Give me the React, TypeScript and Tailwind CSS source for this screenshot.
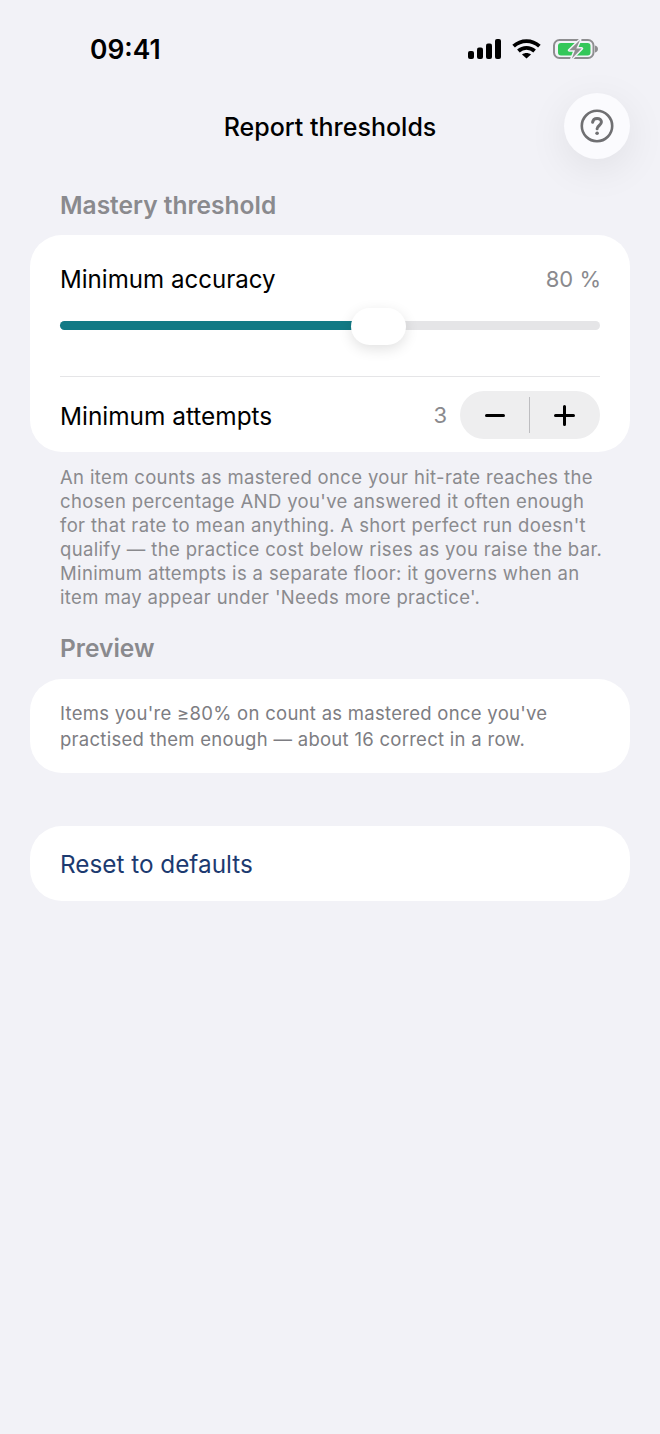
const sans = "font-['Inter','Noto_Sans',sans-serif]"

const StatusIcons = () => (
    <div className="flex items-center">
        <svg width="33" height="20" viewBox="0 0 33 20" fill="#000">
            <rect x="0" y="12" width="6" height="8" rx="2" />
            <rect x="9" y="8.5" width="6" height="11.5" rx="2" />
            <rect x="18" y="4.5" width="6" height="15.5" rx="2" />
            <rect x="27" y="0" width="6" height="20" rx="2" />
        </svg>
        <svg className="ml-[11px]" width="29" height="20" viewBox="0 0 29 20" fill="none" stroke="#000" strokeWidth="3.8">
            <path d="M1.6 7.2C9 .3 20 .3 27.4 7.2" />
            <path d="M6.4 12C11 7.8 18 7.8 22.6 12" />
            <path d="M14.5 19.6 10 15.400C12.500 13.400 16.500 13.400 19 15.400Z" fill="#000" stroke="none" />
        </svg>
        <svg className="ml-[12px]" width="45" height="20" viewBox="0 0 45 20" fill="none">
            <rect x="1" y="1" width="39.5" height="18" rx="5.5" stroke="#8e8e90" strokeWidth="2" />
            <rect x="5" y="4" width="32.5" height="12.5" rx="3" fill="#34c759" />
            <path d="M42 6.5c1.8.4 3 1.8 3 3.5s-1.2 3.100-3 3.500Z" fill="#8e8e90" />
            <path d="M27 1 16.300 11.300H22L18.700 19.700 28.700 9.500H23.300Z" fill="#8e8e90" stroke="#f2f2f7" strokeWidth="3" strokeLinejoin="round" paintOrder="stroke" />
        </svg>
    </div>
)

const HelpIcon = () => (
    <svg width="34" height="34" viewBox="0 0 34 34" fill="none" stroke="#6f6f72">
        <circle cx="17" cy="17" r="15.200" strokeWidth="2.600" />
        <path d="M12.600 13.200c.3-2.400 2.100-3.800 4.500-3.800 2.500 0 4.300 1.500 4.300 3.600 0 3.400-4.300 3.500-4.300 6.800" strokeWidth="3" strokeLinecap="round" />
        <circle cx="17.100" cy="24.300" r="1.800" fill="#6f6f72" stroke="none" />
    </svg>
)

const App = () => {
    return (
        <div className={`${sans} h-[1434px] w-[660px] overflow-hidden bg-[#f2f2f7]`}>
            <div className="flex h-[93px] items-center justify-between pl-[90px] pr-[62px] pt-[5px]">
                <span className="text-[26.4px] font-semibold leading-none text-black">09:41</span>
                <StatusIcons />
            </div>

            <div className="relative flex h-[66px] items-center justify-center">
                <h1 className="pt-[2px] text-[25px] font-medium leading-none text-black">Report thresholds</h1>
                <button className="absolute right-[30px] top-0 flex h-[66px] w-[66px] items-center justify-center rounded-full bg-[#fbfbfe] shadow-[0_10px_40px_rgba(0,0,0,0.08)]">
                    <HelpIcon />
                </button>
            </div>

            <div className="px-[30px]">
                <h2 className="mt-[30px] px-[30px] text-[24.5px] font-semibold leading-[32px] text-[#8a8a8e]">Mastery threshold</h2>

                <div className="mt-[14px] rounded-[32px] bg-white px-[30px]">
                    <div className="flex h-[71px] items-center justify-between pt-[17px]">
                        <span className="pt-[2px] text-[24.1px] leading-[32px] text-black">Minimum accuracy</span>
                        <span className="translate-x-px text-[22px] leading-[28px] text-[#8a8a8e]">80 %</span>
                    </div>
                    <div className="relative mt-[15px] h-[9px] rounded-full bg-[#e5e5e7]">
                        <div className="h-full w-[292px] rounded-l-full bg-[#127a85]" />
                        <div className="absolute left-[291px] top-[-13px] h-[37px] w-[55px] rounded-full bg-white shadow-[0_4px_14px_rgba(0,0,0,0.12)]" />
                    </div>
                    <div className="mt-[46px] border-t border-[#e5e5e7]" />
                    <div className="flex h-[75px] items-center justify-between pt-[1px]">
                        <span className="pt-[2px] text-[24.4px] leading-[32px] text-black">Minimum attempts</span>
                        <div className="flex items-center">
                            <span className="text-[22px] leading-[28px] text-[#8a8a8e]">3</span>
                            <div className="ml-[13px] flex h-[48px] w-[140px] items-center rounded-full bg-[#eeeeef]">
                                <div className="flex w-[69px] items-center justify-center">
                                    <div className="h-[3px] w-[20px] rounded-full bg-black" />
                                </div>
                                <div className="h-[36px] w-px bg-[#bdbdc0]" />
                                <div className="flex flex-1 items-center justify-center">
                                    <svg className="mr-[1px]" width="21" height="21" viewBox="0 0 21 21" stroke="#000" strokeWidth="3" strokeLinecap="round">
                                        <path d="M10.500 1.500v18M1.500 10.500h18" />
                                    </svg>
                                </div>
                            </div>
                        </div>
                    </div>
                </div>

                <p className="mt-[13px] whitespace-nowrap px-[30px] text-[18.5px] leading-[24px] tracking-[0.35px] text-[#8a8a8e]">
                    An item counts as mastered once your hit-rate reaches the<br />
                    chosen percentage AND you've answered it often enough<br />
                    for that rate to mean anything. A short perfect run doesn't<br />
                    qualify — the practice cost below rises as you raise the bar.<br />
                    Minimum attempts is a separate floor: it governs when an<br />
                    item may appear under 'Needs more practice'.
                </p>

                <h2 className="mt-[23px] px-[30px] text-[24.5px] font-semibold leading-[32px] text-[#8a8a8e]">Preview</h2>

                <div className="mt-[15px] rounded-[32px] bg-white px-[30px] pb-[21px] pt-[21px]">
                    <p className="whitespace-nowrap text-[18.5px] leading-[26px] tracking-[0.28px] text-[#7d7d82]">
                        Items you're ≥80% on count as mastered once you've<br />
                        practised them enough — about 16 correct in a row.
                    </p>
                </div>

                <div className="mt-[53px] flex h-[75px] items-center rounded-[32px] bg-white px-[30px]">
                    <span className="pt-[1px] text-[24.3px] leading-[32px] text-[#1c3a70]">Reset to defaults</span>
                </div>
            </div>
        </div>
    )
}

export default App
